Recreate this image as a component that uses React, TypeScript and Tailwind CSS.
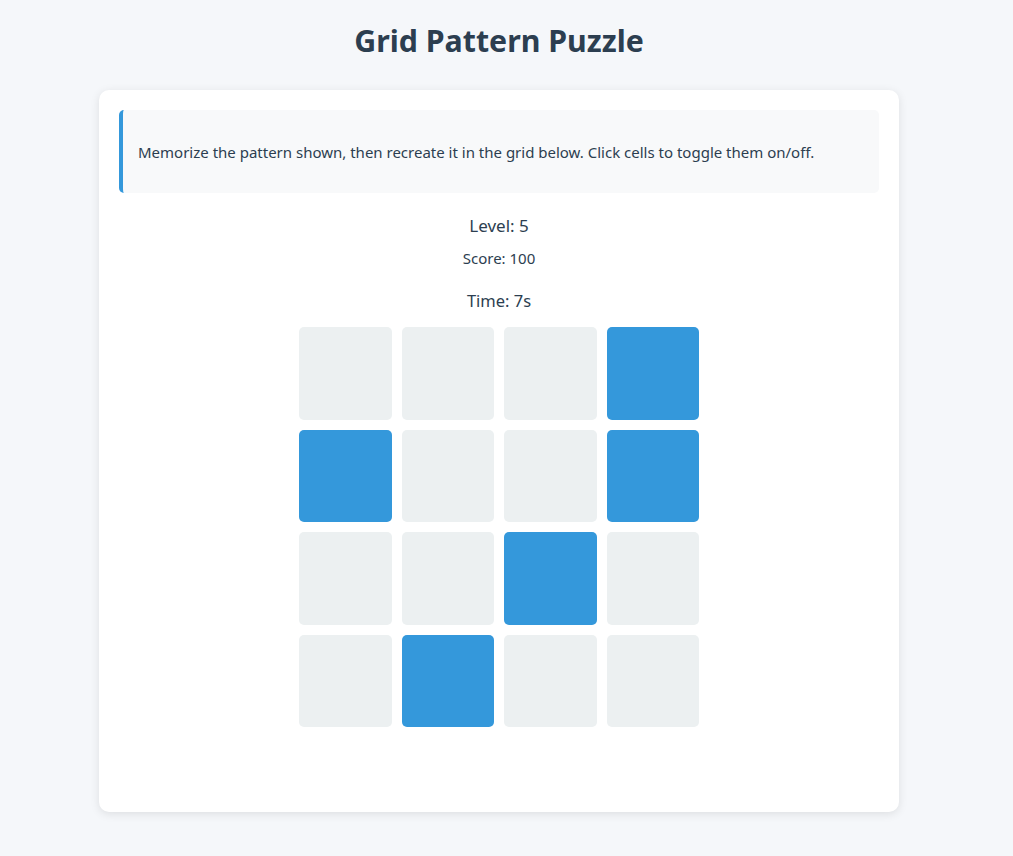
import React from "react";

const pattern = [
  [0, 0, 0, 1],
  [1, 0, 0, 1],
  [0, 0, 1, 0],
  [0, 1, 0, 0],
];

export default function App() {
  return (
    <div
      className="min-h-[856px] bg-[#f5f7fa] pr-[15px] text-[#2c3e50]"
      style={{ fontFamily: '"Segoe UI", "Noto Sans", sans-serif' }}
    >
      <div className="flex flex-col items-center pt-[20px]">
        <h1 className="m-0 text-[30.3px] font-bold leading-[42px] text-[#2c3e50]">
          Grid Pattern Puzzle
        </h1>
        <div className="mt-[28px] w-[800px] rounded-[10px] bg-white p-[20px] pb-[85px] shadow-[0_2px_10px_rgba(0,0,0,0.1)]">
          <div className="flex h-[83px] items-center rounded-[5px] border-l-4 border-[#3498db] bg-[#f8f9fa] px-[15px] pt-[2px]">
            <p className="text-[15px] leading-[21px] text-[#2c3e50]">
              Memorize the pattern shown, then recreate it in the grid below. Click cells to toggle them on/off.
            </p>
          </div>
          <div className="flex flex-col items-center">
            <div className="mt-[21px] text-[17px] leading-[24px]">Level: 5</div>
            <div className="mt-[10px] text-[15px] leading-[20px]">Score: 100</div>
            <div className="mt-[21px] text-[16.5px] leading-[24px]">Time: 7s</div>
            <div className="mt-[14px] grid w-[400px] grid-cols-4 gap-[10px]">
              {pattern.flat().map((v, i) => (
                <div
                  key={i}
                  className={`h-[92.5px] rounded-[5px] ${v ? "bg-[#3498db]" : "bg-[#ecf0f1]"}`}
                />
              ))}
            </div>
          </div>
        </div>
      </div>
    </div>
  );
}
